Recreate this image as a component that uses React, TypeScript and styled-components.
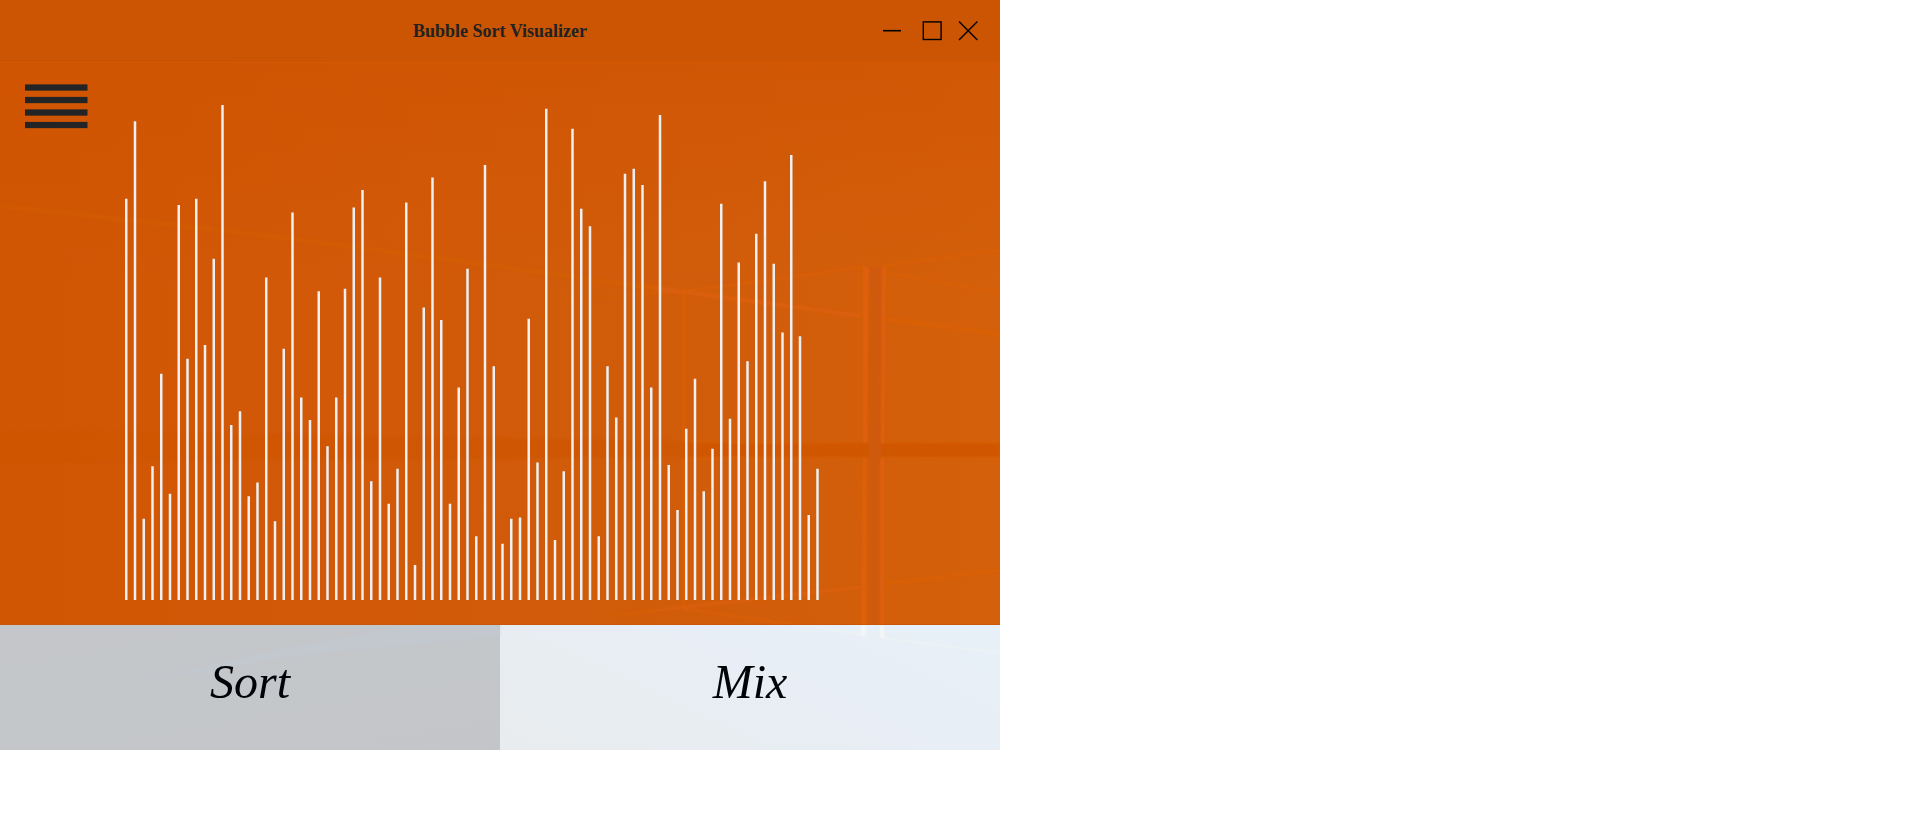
import React, { useState } from "react";
import styled, { createGlobalStyle } from "styled-components";

const INITIAL_VALUES = [
  321, 383, 65, 107, 181, 85, 316, 193, 321, 204, 273, 396, 140, 151, 83, 94,
  258, 63, 201, 310, 162, 144, 247, 123, 162, 249, 314, 328, 95, 258, 77, 105,
  318, 28, 234, 338, 224, 77, 170, 265, 51, 348, 187, 45, 65, 66, 225, 110,
  393, 48, 103, 377, 313, 299, 51, 187, 146, 341, 345, 332, 170, 388, 108, 72,
  137, 177, 87, 121, 317, 145, 270, 191, 293, 335, 269, 214, 356, 211, 68, 105,
];

const BAR_PITCH = 7;
const BAR_WIDTH = 2;
const CHART_HEIGHT = 400;

const GlobalStyle = createGlobalStyle`
  * { box-sizing: border-box; }
  body { margin: 0; background: #fff; }
`;

const AppWindow = styled.main`
  position: relative;
  display: flex;
  flex-direction: column;
  width: 100%;
  max-width: 1000px;
  overflow: hidden;
`;

const TitleBar = styled.header`
  display: grid;
  grid-template-columns: 1fr auto 1fr;
  align-items: center;
  height: 62px;
  padding: 0 16px;
  background: #cb5503;
`;

const Title = styled.h1`
  grid-column: 2;
  margin: 0;
  font: bold 18px/24px "Liberation Serif", serif;
  color: #222;
`;

const Controls = styled.div`
  display: flex;
  justify-content: flex-end;
`;

const ControlButton = styled.button<{ $width: number }>`
  display: flex;
  align-items: center;
  justify-content: center;
  width: ${(p) => p.$width}px;
  height: 36px;
  padding: 0;
  border: 0;
  background: transparent;
  color: #000;
`;

const Stage = styled.section`
  display: flex;
  align-items: flex-start;
  gap: 37px;
  height: 563px;
  padding: 22px 175px 0 25px;
  border-top: 1px solid #d55803;
  border-bottom: 1px solid #c95808;
  background:
    linear-gradient(180deg, rgba(208, 84, 2, 0.7), rgba(208, 84, 2, 0) 40%),
    linear-gradient(90deg, #d15603, #d15908 35%, #d05c0a 65%, #d4600b);
`;

const MenuButton = styled.button`
  position: relative;
  z-index: 1;
  flex: none;
  padding: 0;
  border: 0;
  background: transparent;
  line-height: 0;
`;

const Chart = styled.svg`
  position: relative;
  z-index: 1;
  flex: 1;
  min-width: 0;
  height: 515px;
`;

const Backdrop = styled.svg`
  position: absolute;
  inset: 0;
  width: 100%;
  height: 100%;
  pointer-events: none;
`;

const Actions = styled.footer`
  display: grid;
  grid-template-columns: 1fr 1fr;
`;

const ActionButton = styled.button<{ $dimmed?: boolean }>`
  height: 125px;
  padding: 0 0 12px;
  border: 0;
  background: ${(p) =>
    p.$dimmed
      ? "linear-gradient(170deg, #c4c6ca, #c4c7ca 50%, #c4c5c8)"
      : "linear-gradient(25deg, #e8ecee, #e8edf2 35%, #e8eef6 60%, #e7f0f8)"};
  font: italic 48px/64px "Liberation Serif", serif;
  color: #000408;

  & > span {
    position: relative;
    z-index: 1;
  }
`;

function LightBeams() {
  return (
    <Backdrop viewBox="0 0 1000 750" preserveAspectRatio="none" aria-hidden="true">
      <defs>
        <filter id="soft" x="-10%" y="-10%" width="120%" height="120%">
          <feGaussianBlur stdDeviation="1" />
        </filter>
        <linearGradient id="fade" gradientUnits="userSpaceOnUse" x1="0" y1="0" x2="1000" y2="0">
          <stop offset="0" stopColor="#d3620c" stopOpacity="0.3" />
          <stop offset="0.6" stopColor="#d5620c" stopOpacity="0.4" />
          <stop offset="0.7" stopColor="#df600a" stopOpacity="0.8" />
          <stop offset="1" stopColor="#df600a" stopOpacity="0.6" />
        </linearGradient>
        <clipPath id="upper">
          <rect x="0" y="63" width="1000" height="561" />
        </clipPath>
        <clipPath id="lower">
          <rect x="0" y="625" width="1000" height="125" />
        </clipPath>
      </defs>
      <g clipPath="url(#upper)">
        <g filter="url(#soft)">
          <path d="M0 430L684 441V457L0 462Z" fill="#cf5502" opacity="0.6" />
          <path d="M684 443H1000V457H684Z" fill="#d05603" />
          <path d="M869 267H881V640H869Z" fill="#cf5a08" />
        </g>
        <g fill="none" stroke="url(#fade)" filter="url(#soft)">
          <path d="M0 206L230 231L460 261L684 292" strokeWidth="5" />
          <path d="M684 292L862 316" strokeWidth="4" />
          <path d="M885 319L1000 334" strokeWidth="4" />
          <path d="M570 300L684 291L864 267" strokeWidth="2" />
          <path d="M884 266L1000 250M884 272L1000 293" strokeWidth="2" />
          <path d="M600 617L684 607L862 587M884 584L1000 570" strokeWidth="3" />
          <path d="M684 609L866 635M884 637L1000 653" strokeWidth="2" />
          <path d="M684 441L780 443H864M684 458H864M882 443H1000M882 458H1000" strokeWidth="1" />
        </g>
        <g fill="#df610a" filter="url(#soft)">
          <path d="M863 267H869L867 443H863ZM863 458H866V635H861Z" />
          <path d="M882 266H886L884 443H881ZM880 458H884V637H880Z" />
          <path d="M682 291H685V442H682ZM682 458H685V610H682Z" opacity="0.55" />
        </g>
      </g>
      <g clipPath="url(#lower)">
        <g filter="url(#soft)">
          <path d="M140 682L280 649L410 625H500V636L300 655Z" fill="#c2c9d3" opacity="0.5" />
          <path d="M760 618L866 635M884 638L1000 653" fill="none" stroke="#edf4f5" strokeWidth="2" />
          <path d="M861 622H866V636H861ZM880 622H884V638H880Z" fill="#f4f6f5" />
        </g>
      </g>
    </Backdrop>
  );
}

function BarChart({ values }: { values: number[] }) {
  return (
    <Chart
      viewBox={`0 ${CHART_HEIGHT - 412} 560 412`}
      preserveAspectRatio="xMinYMax meet"
      role="img"
      aria-label="Values to sort"
    >
      {values.map((value, i) => (
        <rect
          key={i}
          x={i * BAR_PITCH}
          y={CHART_HEIGHT - value}
          width={BAR_WIDTH}
          height={value}
          fill="#edeff2"
        />
      ))}
    </Chart>
  );
}

export default function App() {
  const [values, setValues] = useState(INITIAL_VALUES);

  const sort = () => setValues((v) => [...v].sort((a, b) => a - b));
  const mix = () => setValues((v) => [...v].sort(() => Math.random() - 0.5));

  return (
    <>
      <GlobalStyle />
      <AppWindow>
        <TitleBar>
          <Title>Bubble Sort Visualizer</Title>
          <Controls>
            <ControlButton $width={40} aria-label="Minimize">
              <svg width="20" height="20" viewBox="0 0 20 20" stroke="currentColor">
                <path d="M1 9.7H19" strokeWidth="1.6" />
              </svg>
            </ControlButton>
            <ControlButton $width={40} aria-label="Maximize">
              <svg width="20" height="20" viewBox="0 0 20 20" fill="none" stroke="currentColor">
                <rect x="1.3" y="0.9" width="17.8" height="17.6" strokeWidth="1.4" />
              </svg>
            </ControlButton>
            <ControlButton $width={32} aria-label="Close">
              <svg width="20" height="20" viewBox="0 0 20 20" stroke="currentColor">
                <path d="M1 0.5L19.4 18.9M19.4 0.5L1 18.9" strokeWidth="1.4" />
              </svg>
            </ControlButton>
          </Controls>
        </TitleBar>
        <Stage>
          <MenuButton aria-label="Menu">
            <svg width="63" height="45" viewBox="0 0 63 45" fill="#222426" overflow="visible">
              <rect y="-0.6" width="62.5" height="6.25" />
              <rect y="11.9" width="62.5" height="6.25" />
              <rect y="24.4" width="62.5" height="6.25" />
              <rect y="36.9" width="62.5" height="6.25" />
            </svg>
          </MenuButton>
          <BarChart values={values} />
        </Stage>
        <Actions>
          <ActionButton $dimmed onClick={sort}>
            <span>Sort</span>
          </ActionButton>
          <ActionButton onClick={mix}>
            <span>Mix</span>
          </ActionButton>
        </Actions>
        <LightBeams />
      </AppWindow>
    </>
  );
}
